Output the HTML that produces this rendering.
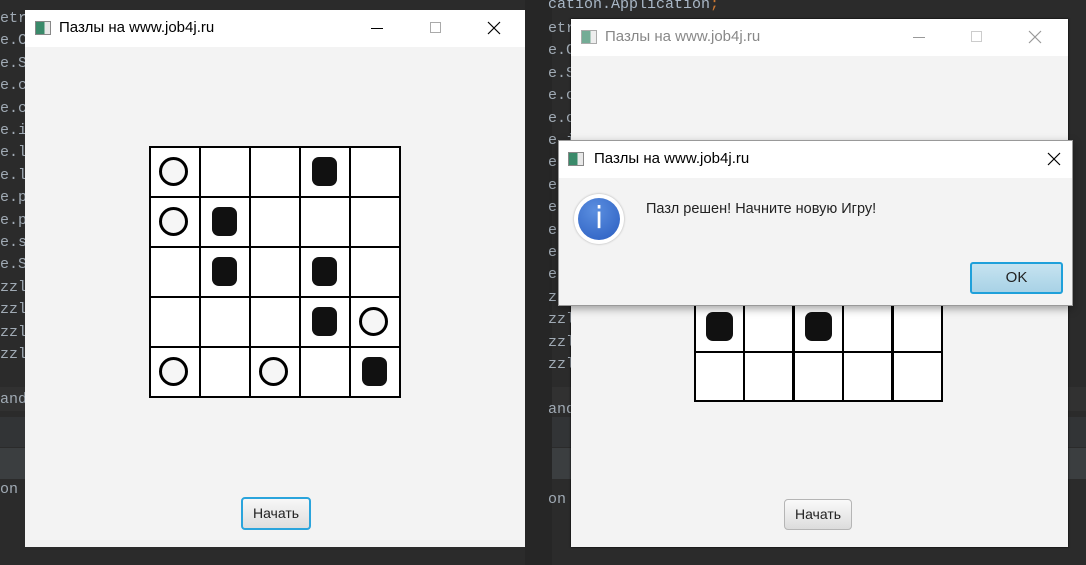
<!DOCTYPE html>
<html><head><meta charset="utf-8"><style>
*{margin:0;padding:0;box-sizing:border-box}
body{width:1086px;height:565px;background:#2b2b2b;position:relative;overflow:hidden;font-family:"Liberation Sans","DejaVu Sans",sans-serif}
.a{position:absolute}
.code{position:absolute;font-family:"Liberation Mono",monospace;font-size:15px;color:#a0aab4;white-space:pre}
.win{position:absolute;background:#f3f3f3}
.tb{position:absolute;left:0;right:0;top:0;height:37px;background:#fff}
.ttl{position:absolute;top:9px;font-size:15px;color:#000}
.ico{position:absolute;top:11px;width:16px;height:14px;border:1px solid #888;background:linear-gradient(90deg,#3a8a6a 0 60%,#e8e8e8 60%)}
.cell{position:absolute;width:52px;height:52px;border:2px solid #000;background:#fff}
.circ{position:absolute;width:29px;height:29px;border:3px solid #000;border-radius:50%;background:#f6f6f6}
.blk{position:absolute;width:25px;height:29px;background:#111;border-radius:7px}
</style></head><body>
<div class="a" style="left:0;top:387px;width:1086px;height:24px;background:#313131"></div>
<div class="a" style="left:0;top:417px;width:1086px;height:30px;background:#323436"></div>
<div class="a" style="left:0;top:448px;width:1086px;height:31px;background:#3b3e40"></div>
<div class="a" style="left:525px;top:0;width:27px;height:565px;background:#262626"></div>
<div class="code" style="left:0;top:8px;line-height:22.4px">etr
e.C
e.S
e.c
e.c
e.i
e.l
e.l
e.p
e.p
e.s
e.S
zzl
zzl
zzl
zzl

and



on</div>
<div class="code" style="left:548px;top:-4px;color:#a9b7c6">cation.Application<span style="color:#cc7832">;</span></div>
<div class="code" style="left:548px;top:18px;line-height:22.4px">etr
e.C
e.S
e.c
e.c
e.i
e.l
e.l
e.p
e.p
e.s
e.S
zzl
zzl
zzl
zzl

and



on</div>

<div class="win" style="left:25px;top:10px;width:500px;height:537px">
<div class="tb"><div class="ico" style="left:10px"></div><div class="ttl" style="left:34px">Пазлы на www.job4j.ru</div>
<div class="a" style="left:346px;top:18px;width:12px;height:1px;background:#000"></div>
<div class="a" style="left:405px;top:12px;width:11px;height:11px;border:1px solid #aaa"></div>
<svg class="a" style="left:462px;top:11px" width="14" height="14"><path d="M1 1L13 13M13 1L1 13" stroke="#000" stroke-width="1.2"/></svg>
</div>
<div class="a" style="left:216px;top:487px;width:70px;height:33px;border:2px solid #2aa4dc;border-radius:4px;background:linear-gradient(#f7f7f7,#dedede);font-size:14px;text-align:center;line-height:29px;color:#222">Начать</div>
</div>
<div id="g1"></div>

<div class="win" style="left:571px;top:19px;width:497px;height:528px;box-shadow:0 0 2px #000">
<div class="tb"><div class="ico" style="left:10px;opacity:.7"></div><div class="ttl" style="left:34px;color:#888">Пазлы на www.job4j.ru</div>
<div class="a" style="left:342px;top:18px;width:12px;height:1px;background:#999"></div>
<div class="a" style="left:400px;top:12px;width:11px;height:11px;border:1px solid #ccc"></div>
<svg class="a" style="left:457px;top:11px" width="14" height="14"><path d="M1 1L13 13M13 1L1 13" stroke="#999" stroke-width="1.2"/></svg>
</div>
<div class="a" style="left:213px;top:480px;width:68px;height:31px;border:1px solid #b5b5b5;border-radius:4px;background:linear-gradient(#fafafa,#dcdcdc);font-size:14px;text-align:center;line-height:29px;color:#222">Начать</div>
</div>
<div id="g2"></div>

<div class="win" style="left:558px;top:140px;width:515px;height:166px;box-shadow:0 3px 8px rgba(0,0,0,.35);border:1px solid #999">
<div class="tb"><div class="ico" style="left:9px"></div><div class="ttl" style="left:35px">Пазлы на www.job4j.ru</div>
<svg class="a" style="left:488px;top:11px" width="14" height="14"><path d="M1 1L13 13M13 1L1 13" stroke="#000" stroke-width="1.2"/></svg>
</div>
<div class="a" style="left:15px;top:53px;width:50px;height:50px;border-radius:50%;background:#fff;box-shadow:0 0 2px #aaa"></div>
<div class="a" style="left:19px;top:57px;width:42px;height:42px;border-radius:50%;background:radial-gradient(circle at 40% 30%,#5b8fe0,#2a5dc0);color:#fff;font-size:30px;text-align:center;line-height:42px;font-family:'DejaVu Sans',sans-serif">i</div>
<div class="a" style="left:87px;top:60px;font-size:14.5px;color:#222">Пазл решен! Начните новую Игру!</div>
<div class="a" style="left:411px;top:121px;width:93px;height:32px;border:2px solid #1fa0da;border-radius:3px;background:linear-gradient(#c6e3f0,#a8d2e6);font-size:15px;text-align:center;line-height:28px;color:#222">OK</div>
</div>

<script>
var g1=document.getElementById('g1'),h='';
var L={'0,0':'c','0,3':'b','1,0':'c','1,1':'b','2,1':'b','2,3':'b','3,3':'b','3,4':'c','4,0':'c','4,2':'c','4,4':'b'};
for(var r=0;r<5;r++)for(var c=0;c<5;c++){var x=149+c*50,y=146+r*50;h+='<div class="cell" style="left:'+x+'px;top:'+y+'px"></div>';var p=L[r+','+c];
if(p=='c')h+='<div class="circ" style="left:'+(x+10)+'px;top:'+(y+11)+'px"></div>';
if(p=='b')h+='<div class="blk" style="left:'+(x+13)+'px;top:'+(y+11)+'px"></div>';}
g1.innerHTML=h;
var g2=document.getElementById('g2');h='';
for(var r=0;r<2;r++)for(var c=0;c<5;c++){var x=Math.round(694+c*49.4),y=302+r*49;h+='<div class="cell" style="left:'+x+'px;top:'+y+'px;width:51px;height:51px"></div>';
if(r==0&&(c==0||c==2))h+='<div class="blk" style="left:'+(x+12)+'px;top:'+(y+10)+'px;width:27px"></div>';}
g2.innerHTML=h;
</script>
</body></html>
